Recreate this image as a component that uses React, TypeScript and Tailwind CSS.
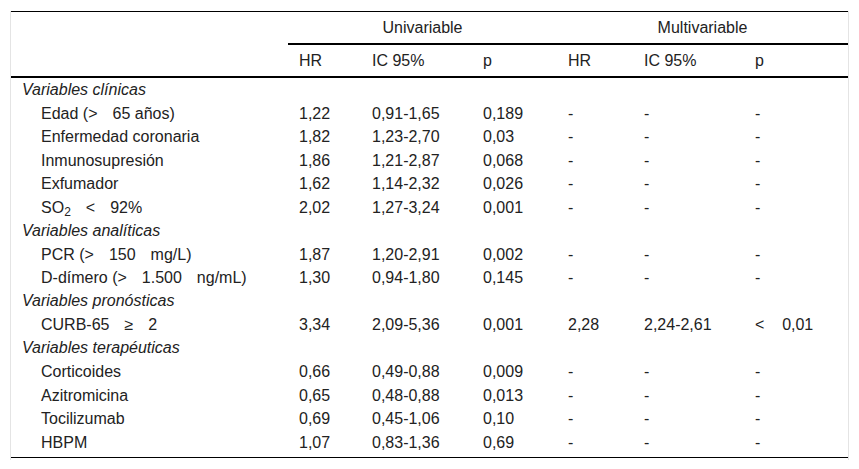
import React from "react";

const cols = "grid grid-cols-[277px_73px_111px_85px_76px_111px_104px]";

// wide gap that the source uses between operator and value
function Sp() {
  return <span className="inline-block w-[15px]" />;
}

type Row =
  | { section: string }
  | { label: React.ReactNode; v: string[] };

const rows: Row[] = [
  { section: "Variables clínicas" },
  { label: <>Edad (&gt;<Sp />65 años)</>, v: ["1,22", "0,91-1,65", "0,189", "-", "-", "-"] },
  { label: "Enfermedad coronaria", v: ["1,82", "1,23-2,70", "0,03", "-", "-", "-"] },
  { label: "Inmunosupresión", v: ["1,86", "1,21-2,87", "0,068", "-", "-", "-"] },
  { label: "Exfumador", v: ["1,62", "1,14-2,32", "0,026", "-", "-", "-"] },
  {
    label: (
      <>
        SO<sub className="text-[12px]">2</sub>
        <Sp />&lt;<Sp />92%
      </>
    ),
    v: ["2,02", "1,27-3,24", "0,001", "-", "-", "-"],
  },
  { section: "Variables analíticas" },
  { label: <>PCR (&gt;<Sp />150<Sp />mg/L)</>, v: ["1,87", "1,20-2,91", "0,002", "-", "-", "-"] },
  { label: <>D-dímero (&gt;<Sp />1.500<Sp />ng/mL)</>, v: ["1,30", "0,94-1,80", "0,145", "-", "-", "-"] },
  { section: "Variables pronósticas" },
  { label: <>CURB-65<Sp />≥<Sp />2</>, v: ["3,34", "2,09-5,36", "0,001", "2,28", "2,24-2,61", "<\u00a0\u00a0\u00a0\u00a00,01"] },
  { section: "Variables terapéuticas" },
  { label: "Corticoides", v: ["0,66", "0,49-0,88", "0,009", "-", "-", "-"] },
  { label: "Azitromicina", v: ["0,65", "0,48-0,88", "0,013", "-", "-", "-"] },
  { label: "Tocilizumab", v: ["0,69", "0,45-1,06", "0,10", "-", "-", "-"] },
  { label: "HBPM", v: ["1,07", "0,83-1,36", "0,69", "-", "-", "-"] },
];

export default function App() {
  return (
    <div className="h-[469px] w-[859px] bg-white pt-[11px] text-[16px] text-[#222] [font-family:'Liberation_Sans',Arial,sans-serif]">
      <div className="ml-[10px] w-[839px] border-x border-[#e4e4e4] pb-[2px]">
        <div className="border-t border-black">
          <div className={cols}>
            <div />
            <div className="col-span-3 flex h-[33px] items-center justify-center border-b-2 border-black">
              Univariable
            </div>
            <div className="col-span-3 flex h-[33px] items-center justify-center border-b-2 border-black">
              Multivariable
            </div>
          </div>
          <div className={`${cols} h-[33px] items-center border-b-2 border-black`}>
            <div />
            <div className="pl-[11px]">HR</div>
            <div className="pl-[11px]">IC 95%</div>
            <div className="pl-[11px]">p</div>
            <div className="pl-[11px]">HR</div>
            <div className="pl-[11px]">IC 95%</div>
            <div className="pl-[11px]">p</div>
          </div>
          <div className="border-b border-black pb-[3px]">
            {rows.map((r, i) =>
              "section" in r ? (
                <div key={i} className="flex h-[23.5px] items-center pl-[11px] italic">
                  {r.section}
                </div>
              ) : (
                <div key={i} className={`${cols} h-[23.5px] items-center`}>
                  <div className="pl-[30px] whitespace-nowrap">{r.label}</div>
                  {r.v.map((x, j) => (
                    <div key={j} className="pl-[11px] whitespace-pre">
                      {x}
                    </div>
                  ))}
                </div>
              )
            )}
          </div>
        </div>
      </div>
    </div>
  );
}
